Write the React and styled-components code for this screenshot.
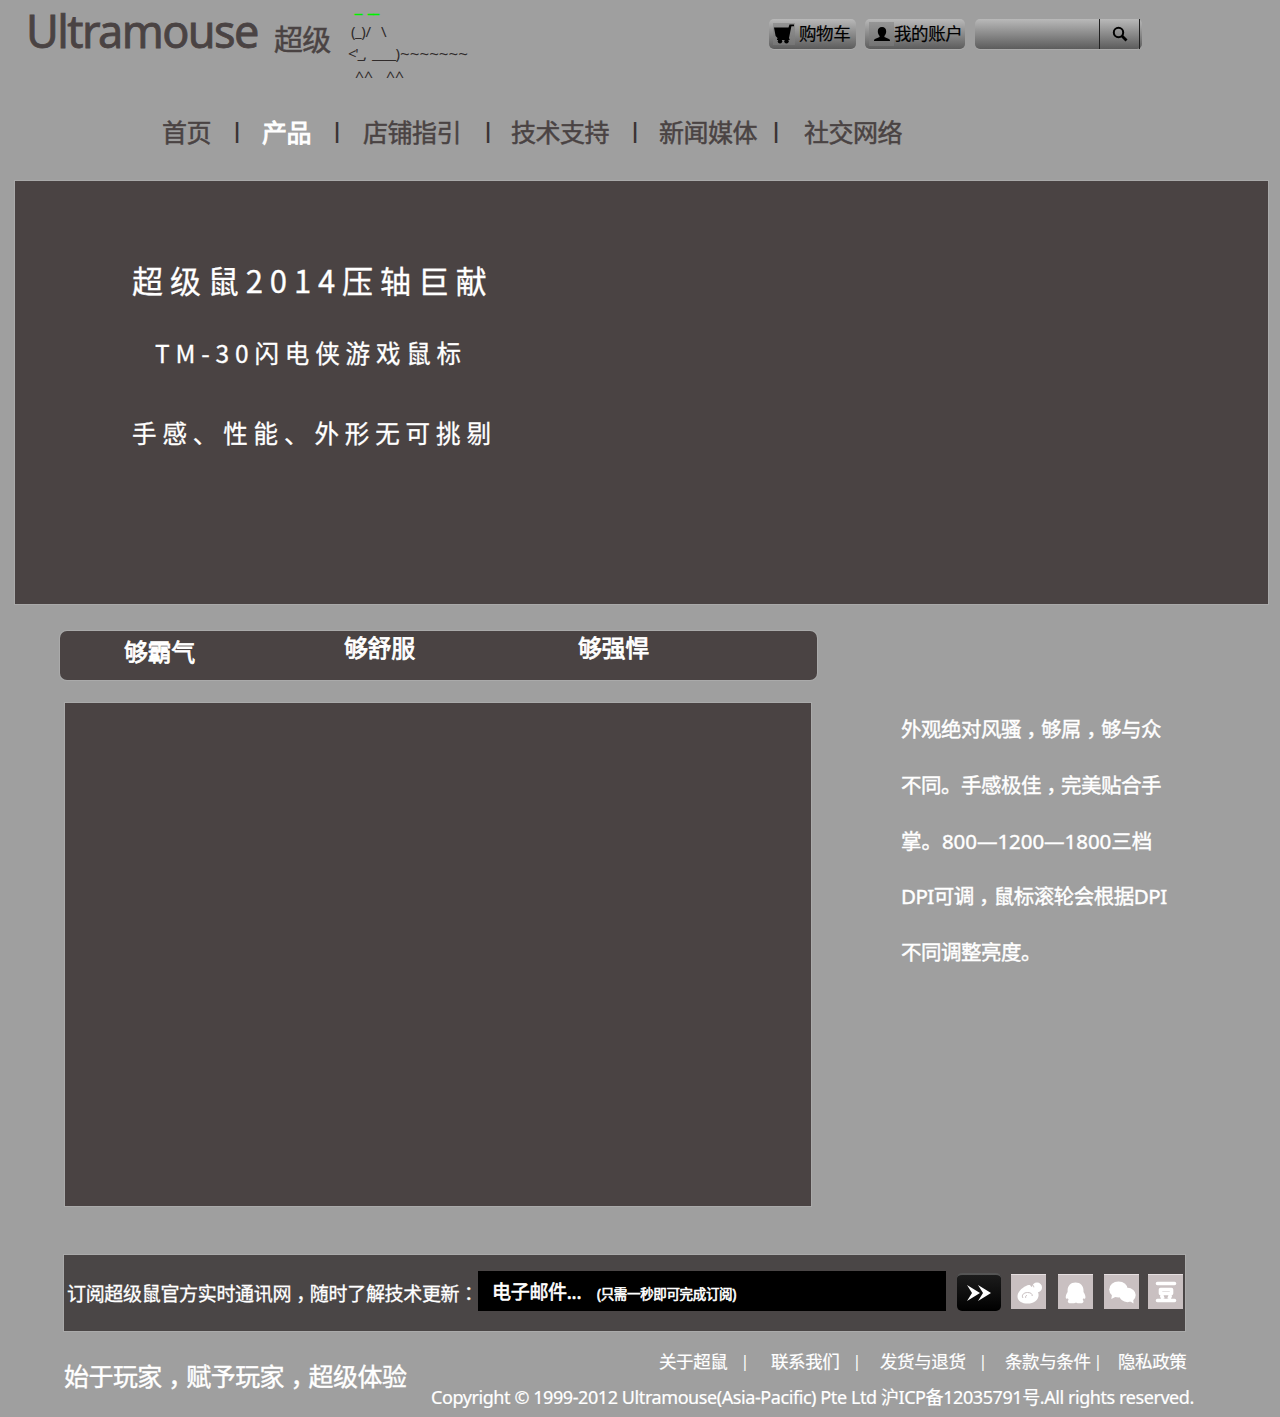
import { Fragment } from "react";
import styled, { createGlobalStyle } from "styled-components";

const menu = [
  { label: "首页", width: 65, gap: 15 },
  { label: "产品", width: 65, gap: 16, active: true },
  { label: "店铺指引", width: 115, gap: 13 },
  { label: "技术支持", width: 114, gap: 14 },
  { label: "新闻媒体", width: 107, gap: 18 },
  { label: "社交网络", width: 110 },
];

const tabs = [
  { label: "够霸气", width: 220, drop: 4 },
  { label: "够舒服", width: 234, drop: 0 },
  { label: "够强悍", width: 120, drop: 0 },
];

const description = [
  { text: "外观绝对风骚，够屌，够与众" },
  { text: "不同。手感极佳，完美贴合手" },
  { text: "掌。800—1200—1800三档", spacing: -0.05 },
  { text: "DPI可调，鼠标滚轮会根据DPI" },
  { text: "不同调整亮度。" },
];

const links = [
  { label: "关于超鼠", width: 81, gap: 21 },
  { label: "联系我们", width: 81, gap: 18 },
  { label: "发货与退货", width: 98, gap: 17 },
  { label: "条款与条件", width: 88, gap: 15 },
  { label: "隐私政策", width: 75 },
];

// the comma and the colon stand in the middle of their cell
const punctuate = (text) =>
  text.split(/([，：])/).map((part, index) =>
    part === "，" || part === "：" ? (
      <Mark key={index} lang="zh-TW" $low={part === "，"}>
        {part}
      </Mark>
    ) : (
      part
    )
  );

const Mouse = () => (
  <MouseArt viewBox="0 0 130 90">
    <g fill="#00f000" stroke="#00f000" strokeWidth="0.9" fontSize="11">
      <text x="9" y="13" textLength="7" lengthAdjust="spacingAndGlyphs">_</text>
      <text x="22" y="13" textLength="11" lengthAdjust="spacingAndGlyphs">__</text>
    </g>
    <text x="5" y="37" textLength="20">(_)/</text>
    <text x="35" y="37">\</text>
    <text x="2" y="59" textLength="19">{"<'_,"}</text>
    <text x="26" y="59" textLength="28">____)</text>
    <text x="54" y="59" textLength="68" lengthAdjust="spacingAndGlyphs">~~~~~~~</text>
    <text x="9" y="82" textLength="18" lengthAdjust="spacingAndGlyphs">^^</text>
    <text x="40" y="82" textLength="18" lengthAdjust="spacingAndGlyphs">^^</text>
  </MouseArt>
);

const CartIcon = () => (
  <svg width="22" height="22" viewBox="0 0 22 22">
    <path d="M1 4.500h14.500l1-3H21v1.800h-2.600L16 15l.8 2H4v-1.600h1L2.600 13z" />
    <circle cx="7" cy="18.200" r="2.200" />
    <circle cx="13.500" cy="18.200" r="2.200" />
  </svg>
);

const UserIcon = () => (
  <svg width="25" height="24" viewBox="0 0 25 24">
    <path d="M13 5c2.700 0 4.200 1.800 4.200 4.300 0 2-.8 3.700-1.800 4.600v1.200l4.600 2c.6.3 1 .9 1 1.900H5c0-1 .4-1.600 1-1.900l4.600-2v-1.200c-1-.9-1.800-2.600-1.800-4.600C8.800 6.800 10.300 5 13 5z" />
  </svg>
);

const SearchIcon = () => (
  <svg width="16" height="16" viewBox="0 0 16 16" fill="none" stroke="#000">
    <circle cx="6.500" cy="6.500" r="4.700" strokeWidth="2" />
    <path d="M10 10l4.500 4.500" strokeWidth="2.800" />
  </svg>
);

const WeiboIcon = () => (
  <svg width="35" height="35" viewBox="0 0 35 35">
    <path fill="#fff" d="M15 11c2-1.500 5-1.500 5 .8 2.500-.4 4 .6 3.600 2.700 2.500 1 4 2.700 4 5.400 0 5-5 8.600-10.900 8.600C11 28.500 6.500 26 6.500 21.400c0-4 4-8.400 8.500-10.400z" />
    <circle cx="26" cy="12.500" r="5" fill="#fff" />
    <path fill="none" stroke="#c9c0c1" strokeWidth="1" d="M20 9.500c1.800 0 2.700 1 2.800 2.800M12 23c-2-3 1-5.500 4.500-5.500s5 1.500 4.700 3.500M16 20.500c-1.500 0-2 1.700-1 2.500" />
  </svg>
);

const QqIcon = () => (
  <svg width="35" height="35" viewBox="0 0 35 35">
    <path fill="#fff" d="M17.500 7.500c5 0 8 3.300 8 8v1.600c1.300 1.800 2.200 4 1.900 6-.2 1-1.200.9-2 .1l-.7 1.600c1.200 1 1.200 3-.7 3.400-2 .4-4.500.1-6-.8-1.600.9-4.700 1.200-6.700.8-1.900-.4-1.900-2.400-.7-3.400l-.8-1.600c-.8.8-1.800.9-2-.1-.3-2 .5-4.200 1.800-6v-1.600c0-4.700 3-8 7.900-8z" />
  </svg>
);

const WechatIcon = () => (
  <svg width="35" height="35" viewBox="0 0 35 35">
    <g fill="#fff">
      <ellipse cx="14.500" cy="14.500" rx="9.300" ry="8" />
      <path d="M8 19.500l-.7 4.500 5-2.500z" />
      <ellipse cx="23.500" cy="20" rx="8.200" ry="7.200" />
      <path d="M25 25.500l4.500 3-.3-5z" />
    </g>
  </svg>
);

const DoubanIcon = () => (
  <svg width="35" height="35" viewBox="0 0 35 35" fill="none" stroke="#fff">
    <path strokeWidth="3.600" strokeLinecap="round" d="M9.500 8.500h17M9.500 25.500h17" />
    <path strokeWidth="3.600" strokeLinejoin="round" d="M12.500 14.500h11v4h-11zM13.500 20l1.500 4M22.500 20L21 24" />
  </svg>
);

const App = () => {
  return (
    <>
      <GlobalStyle />
      <Page>
        <Header>
          <Brand>Ultramouse</Brand>
          <BrandSuffix>超级</BrandSuffix>
          <Mouse />
          <Tools>
            <ToolButton $width={87}>
              <IconBox $width={26}>
                <CartIcon />
              </IconBox>
              <ToolLabel>购物车</ToolLabel>
            </ToolButton>
            <ToolButton $width={100}>
              <IconBox $width={25}>
                <UserIcon />
              </IconBox>
              <ToolLabel>我的账户</ToolLabel>
            </ToolButton>
            <Search>
              <SearchButton>
                <SearchIcon />
              </SearchButton>
            </Search>
          </Tools>
        </Header>

        <Nav>
          {menu.map(({ label, width, gap, active }) => (
            <Fragment key={label}>
              <NavItem $width={width} $active={active}>
                {label}
              </NavItem>
              {gap && <NavDivider $gap={gap}>|</NavDivider>}
            </Fragment>
          ))}
        </Nav>

        <Hero>
          <HeroLine $size={31} $spacing={6.9}>超级鼠2014压轴巨献</HeroLine>
          <HeroLine $size={24.5} $spacing={5.85} $top={33} $indent={23}>
            TM-30闪电侠游戏鼠标
          </HeroLine>
          <HeroLine $size={24.5} $spacing={5.9} $top={40}>
            手感、性能、外形无可挑剔
          </HeroLine>
        </Hero>

        <Tabs>
          {tabs.map(({ label, width, drop }) => (
            <Tab key={label} $width={width} $drop={drop}>
              {label}
            </Tab>
          ))}
        </Tabs>

        <Main>
          <Preview />
          <Description>
            {description.map(({ text, spacing }) => (
              <DescriptionLine key={text} $spacing={spacing}>
                {punctuate(text)}
              </DescriptionLine>
            ))}
          </Description>
        </Main>

        <Subscribe>
          <SubscribeLabel>
            {punctuate("订阅超级鼠官方实时通讯网，随时了解技术更新：")}
          </SubscribeLabel>
          <Email>
            <EmailLabel>电子邮件...</EmailLabel>
            <EmailHint>(只需一秒即可完成订阅)</EmailHint>
          </Email>
          <Submit>
            <svg width="26" height="18" viewBox="0 0 26 18" fill="#fff">
              <path d="M1 1l13 8L1 17l5-8zM12 1l13 8-13 8 5-8z" />
            </svg>
          </Submit>
          <Social $left={10}>
            <WeiboIcon />
          </Social>
          <Social $left={12}>
            <QqIcon />
          </Social>
          <Social $left={11}>
            <WechatIcon />
          </Social>
          <Social $left={9}>
            <DoubanIcon />
          </Social>
        </Subscribe>

        <Footer>
          <Slogan>{punctuate("始于玩家，赋予玩家，超级体验")}</Slogan>
          <Legal>
            <Links>
              {links.map(({ label, width, gap }) => (
                <Fragment key={label}>
                  <FooterLink $width={width}>{label}</FooterLink>
                  {gap && <LinkDivider $gap={gap}>|</LinkDivider>}
                </Fragment>
              ))}
            </Links>
            <Copyright>
              Copyright © 1999-2012 Ultramouse(Asia-Pacific) Pte Ltd
              沪ICP备12035791号.All rights reserved.
            </Copyright>
          </Legal>
        </Footer>
      </Page>
    </>
  );
};

export default App;

const GlobalStyle = createGlobalStyle`
  * {
    box-sizing: border-box;
  }

  body {
    margin: 0;
    background-color: #9f9f9f;
    font-family: "Noto Sans", "Noto Sans CJK SC", sans-serif;
    white-space: nowrap;
  }
`;

const Page = styled.div`
  width: 1280px;
  height: 1417px;
  overflow: hidden;
  background-color: #9f9f9f;
`;

const Mark = styled.span`
  font-family: "Noto Sans CJK TC", sans-serif;
  line-height: 0;
  vertical-align: ${(props) => (props.$low ? "-0.3em" : "0")};
`;

const Header = styled.header`
  display: flex;
  height: 108px;
  padding-left: 26px;
`;

const Brand = styled.h1`
  width: 248px;
  margin: 0;
  color: #4a4343;
  font-size: 45px;
  font-weight: 400;
  line-height: 62px;
  letter-spacing: -1.6px;
  -webkit-text-stroke: 0.8px #4a4343;
`;

const BrandSuffix = styled.span`
  width: 72px;
  padding-top: 20px;
  color: #4a4343;
  font-size: 29px;
  line-height: 40px;
  letter-spacing: -0.7px;
  -webkit-text-stroke: 0.5px #4a4343;
`;

const MouseArt = styled.svg`
  width: 130px;
  height: 90px;
  fill: #302b2b;
  font-size: 15px;
`;

const Tools = styled.div`
  display: flex;
  padding: 19px 0 0 293px;
`;

const ToolButton = styled.div`
  display: flex;
  align-items: center;
  width: ${(props) => props.$width}px;
  height: 30px;
  margin-right: ${(props) => (props.$width === 87 ? 9 : 10)}px;
  padding-left: 4px;
  border-radius: 5px;
  background: linear-gradient(#b9b9b9, #5c5c5c);
  box-shadow: 0 1px 0 #aaa;
  color: #000;
`;

const ToolLabel = styled.span`
  height: 30px;
  font-size: 17.500px;
  line-height: 28px;
  letter-spacing: -0.4px;
  -webkit-text-stroke: 0.2px;
`;

const IconBox = styled.span`
  display: flex;
  align-items: center;
  width: ${(props) => props.$width}px;
  height: 24px;
  flex-shrink: 0;

  svg {
    background-color: #8080808c;
  }
`;

const Search = styled.div`
  display: flex;
  justify-content: flex-end;
  width: 167px;
  height: 30px;
  padding-right: 2px;
  border-radius: 5px;
  background: linear-gradient(#b9b9b9, #5c5c5c);
  box-shadow: 0 1px 0 #aaa;
`;

const SearchButton = styled.div`
  display: flex;
  align-items: center;
  justify-content: center;
  width: 41px;
  border: solid #222;
  border-width: 0 1px;
`;

const Nav = styled.nav`
  display: flex;
  align-items: center;
  height: 48px;
  padding-left: 162px;
`;

const NavItem = styled.span`
  width: ${(props) => props.$width}px;
  color: ${(props) => (props.$active ? "#fff" : "#4a4343")};
  font-size: 25px;
  line-height: 46px;
  letter-spacing: -0.5px;
  -webkit-text-stroke: ${(props) => (props.$active ? "0.9px" : "0.5px")};
`;

const NavDivider = styled.span`
  width: 20px;
  height: 44px;
  margin-right: ${(props) => props.$gap}px;
  color: #3a3333;
  font-size: 22px;
  font-weight: 700;
  line-height: 39px;
  text-align: center;
`;

const Hero = styled.section`
  width: 1253px;
  height: 423px;
  margin: 25px 0 0 15px;
  padding: 79px 0 0 117px;
  background-color: #4a4343;
  box-shadow: 0 0 0 1px #aaa;
  color: #fff;
  font-family: "Noto Sans CJK SC", sans-serif;
`;

const HeroLine = styled.p`
  height: 40px;
  margin: ${(props) => props.$top || 0}px 0 0 ${(props) => props.$indent || 0}px;
  font-size: ${(props) => props.$size}px;
  line-height: 40px;
  letter-spacing: ${(props) => props.$spacing}px;
  -webkit-text-stroke: 0.3px;
`;

const Tabs = styled.div`
  display: flex;
  width: 757px;
  height: 49px;
  margin: 27px 0 0 60px;
  padding-left: 64px;
  border-radius: 7px;
  background-color: #4a4343;
  box-shadow: 0 0 0 1px #aaa;
`;

const Tab = styled.span`
  width: ${(props) => props.$width}px;
  padding-top: ${(props) => props.$drop}px;
  color: #fff;
  font-size: 24px;
  line-height: 34px;
  letter-spacing: -0.4px;
  -webkit-text-stroke: 0.8px;
`;

const Main = styled.main`
  display: flex;
  height: 503px;
  margin: 23px 0 0 65px;
`;

const Preview = styled.div`
  width: 746px;
  background-color: #4a4343;
  box-shadow: 0 0 0 1px #aaa;
`;

const Description = styled.div`
  margin-left: 90px;
  color: #fff;
  font-size: 20.500px;
`;

const DescriptionLine = styled.p`
  height: 55.800px;
  margin: 0;
  line-height: 52px;
  letter-spacing: ${(props) => props.$spacing || -0.5}px;
  -webkit-text-stroke: 0.4px;
`;

const Subscribe = styled.section`
  display: flex;
  align-items: center;
  width: 1121px;
  height: 76px;
  margin: 49px 0 0 64px;
  padding-left: 3px;
  background-color: #4a4646;
  box-shadow: 0 0 0 1px #aaa;
  color: #fff;
`;

const SubscribeLabel = styled.span`
  width: 411px;
  font-size: 19px;
  letter-spacing: -0.32px;
  -webkit-text-stroke: 0.3px;
`;

const Email = styled.div`
  display: flex;
  align-items: center;
  width: 468px;
  height: 40px;
  margin-top: -4px;
  padding-left: 14px;
  background-color: #000;
`;

const EmailLabel = styled.span`
  width: 105px;
  font-size: 19px;
  letter-spacing: -0.3px;
  -webkit-text-stroke: 0.6px;
`;

const EmailHint = styled.span`
  padding-top: 3px;
  font-size: 13.500px;
  letter-spacing: -0.35px;
  -webkit-text-stroke: 0.6px;
`;

const Submit = styled.div`
  display: flex;
  align-items: center;
  justify-content: center;
  width: 44px;
  height: 38px;
  margin: -2px 0 0 11px;
  border-top: 2px solid #555;
  border-radius: 5px;
  background: linear-gradient(#1c1c1c, #000);
`;

const Social = styled.div`
  width: 35px;
  height: 35px;
  margin: -3px 0 0 ${(props) => props.$left}px;
  border-top: 1px solid #e6dfe0;
  background-color: #c9c0c1;
`;

const Footer = styled.footer`
  display: flex;
  color: #fff;
`;

const Slogan = styled.p`
  width: 367px;
  margin: 25px 0 0 64px;
  font-size: 25px;
  line-height: 40px;
  letter-spacing: -0.55px;
  -webkit-text-stroke: 0.4px;
`;

const Legal = styled.div`
  padding-top: 18px;
`;

const Links = styled.div`
  display: flex;
  align-items: center;
  height: 24px;
  margin-left: 228px;
`;

const FooterLink = styled.span`
  width: ${(props) => props.$width}px;
  font-size: 17.500px;
  letter-spacing: -0.4px;
  line-height: 24px;
  -webkit-text-stroke: 0.2px;
`;

const LinkDivider = styled.span`
  width: 10px;
  margin-right: ${(props) => props.$gap}px;
  font-size: 16px;
  line-height: 20px;
  text-align: center;
`;

const Copyright = styled.p`
  margin: 12px 0 0;
  font-size: 18px;
  line-height: 24px;
  letter-spacing: -0.42px;
  -webkit-text-stroke: 0.2px;
`;
